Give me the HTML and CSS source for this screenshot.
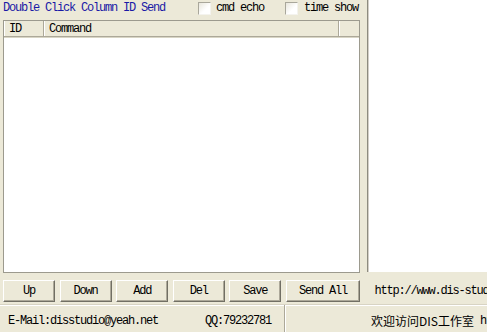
FILE: index.html
```html
<!DOCTYPE html>
<html>
<head>
<meta charset="utf-8">
<link rel="stylesheet" href="styles.css">
</head>
<body>
<div class="app">
  <div class="top">
    <div class="left">
      <div class="toolbar">
        <span class="hint">Double Click Column ID Send</span>
        <label class="chk chk-echo"><span class="box"></span><span class="lbl">cmd echo</span></label>
        <label class="chk chk-time"><span class="box"></span><span class="lbl">time show</span></label>
      </div>
      <div class="list">
        <div class="lhead">
          <div class="col c-id">ID</div>
          <div class="col c-cmd">Command</div>
          <div class="col c-x"></div>
        </div>
        <div class="lbody"></div>
      </div>
    </div>
    <div class="output"></div>
  </div>
  <div class="btnrow">
    <button class="btn">Up</button>
    <button class="btn">Down</button>
    <button class="btn">Add</button>
    <button class="btn">Del</button>
    <button class="btn">Save</button>
    <button class="btn btn-wide">Send All</button>
    <span class="url">http://www.dis-studio.com</span>
  </div>
  <div class="status">
    <div class="pane p1"><span class="mail">E-Mail:disstudio@yeah.net</span><span class="qq">QQ:79232781</span></div>
    <div class="pane p2"><span class="cn">欢迎访问DIS工作室</span><span class="mono">http://www.dis-studio.com</span></div>
  </div>
</div>
</body>
</html>
```

FILE: styles.css
```css
html, body {
  margin: 0;
  padding: 0;
}
body {
  background: #ECE9D8;
  width: 487px;
  height: 332px;
  overflow: hidden;
  font-family: "Liberation Mono", "DejaVu Sans Mono", monospace;
  font-size: 12px;
  letter-spacing: -1.2px;
  color: #000;
}
.app {
  display: flex;
  flex-direction: column;
  width: 487px;
  height: 332px;
}
.top {
  display: flex;
  height: 273px;
}
.left {
  width: 367px;
  display: flex;
  flex-direction: column;
}
.toolbar {
  height: 20px;
  display: flex;
  align-items: center;
  padding-left: 3px;
  padding-bottom: 4px;
  box-sizing: border-box;
  white-space: nowrap;
}
.hint {
  color: #1a1aa6;
  width: 162px;
}
.chk {
  display: flex;
  align-items: center;
}
.chk-echo { margin-left: 33px; }
.chk-time { margin-left: 21px; }
.box {
  width: 11px;
  height: 11px;
  background: linear-gradient(135deg, #e8e6dc, #ffffff 60%);
  border: 1px solid;
  border-color: #a9a79b #f4f3ee #f4f3ee #a9a79b;
}
.chk-echo .lbl { margin-left: 5px; }
.chk-time .lbl { margin-left: 6px; }
.list {
  margin-left: 3px;
  width: 355px;
  height: 251px;
  border: 1px solid #9c9a8e;
  background: #fff;
  display: flex;
  flex-direction: column;
}
.lhead {
  display: flex;
  height: 15px;
  background: #ECE9D8;
  border-bottom: 1px solid #aca899;
  box-shadow: 0 1px 0 #d8d5c5;
}
.col {
  height: 15px;
  line-height: 16px;
  padding-left: 5px;
  box-sizing: border-box;
  border-right: 1px solid #aca899;
  box-shadow: inset 1px 0 0 #fff;
}
.c-id { width: 40px; }
.c-cmd { width: 295px; }
.c-x { flex: 1; border-right: 0; }
.lbody { flex: 1; }
.output {
  flex: 1;
  background: #fff;
  border-left: 1px solid #8e8c80;
  box-shadow: inset 1px 0 0 #d4d0c8;
  height: 272px;
}
.btnrow {
  height: 31px;
  display: flex;
  align-items: flex-start;
  padding-top: 7px;
  padding-left: 3px;
  box-sizing: border-box;
  gap: 4.6px;
  white-space: nowrap;
  overflow: hidden;
}
.btn {
  flex: 0 0 auto;
  width: 52px;
  height: 22px;
  padding: 0;
  margin: 0;
  font-family: inherit;
  font-size: 12px;
  letter-spacing: -1.2px;
  color: #000;
  background: #ECE9D8;
  border: 1px solid;
  border-color: #fff #716f64 #716f64 #fff;
  box-shadow: inset -1px -1px 0 #aca899;
  text-align: center;
  line-height: 20px;
}
.btn-wide { width: 74px; }
.url {
  flex: 0 0 auto;
  margin-left: 10px;
  line-height: 22px;
}
.status {
  height: 28px;
  display: flex;
  border-top: 1px solid #d8d4c4;
  box-shadow: inset 0 1px 0 #fff;
  box-sizing: border-box;
  white-space: nowrap;
  overflow: hidden;
}
.pane {
  display: flex;
  align-items: center;
  padding-top: 4px;
  box-sizing: border-box;
  height: 100%;
}
.p1 {
  flex: 0 0 auto;
  width: 285px;
  padding-left: 8px;
  border-right: 1px solid #aca899;
}
.mail { width: 197px; }
.p2 {
  flex: 1;
  min-width: 0;
  padding-left: 85px;
  border-left: 1px solid #fff;
  overflow: hidden;
}
.cn {
  flex: 0 0 auto;
  font-family: "Noto Sans CJK SC", sans-serif;
  letter-spacing: 0;
  font-size: 12px;
}
.mono {
  flex: 0 0 auto;
  margin-left: 6px;
}
```
